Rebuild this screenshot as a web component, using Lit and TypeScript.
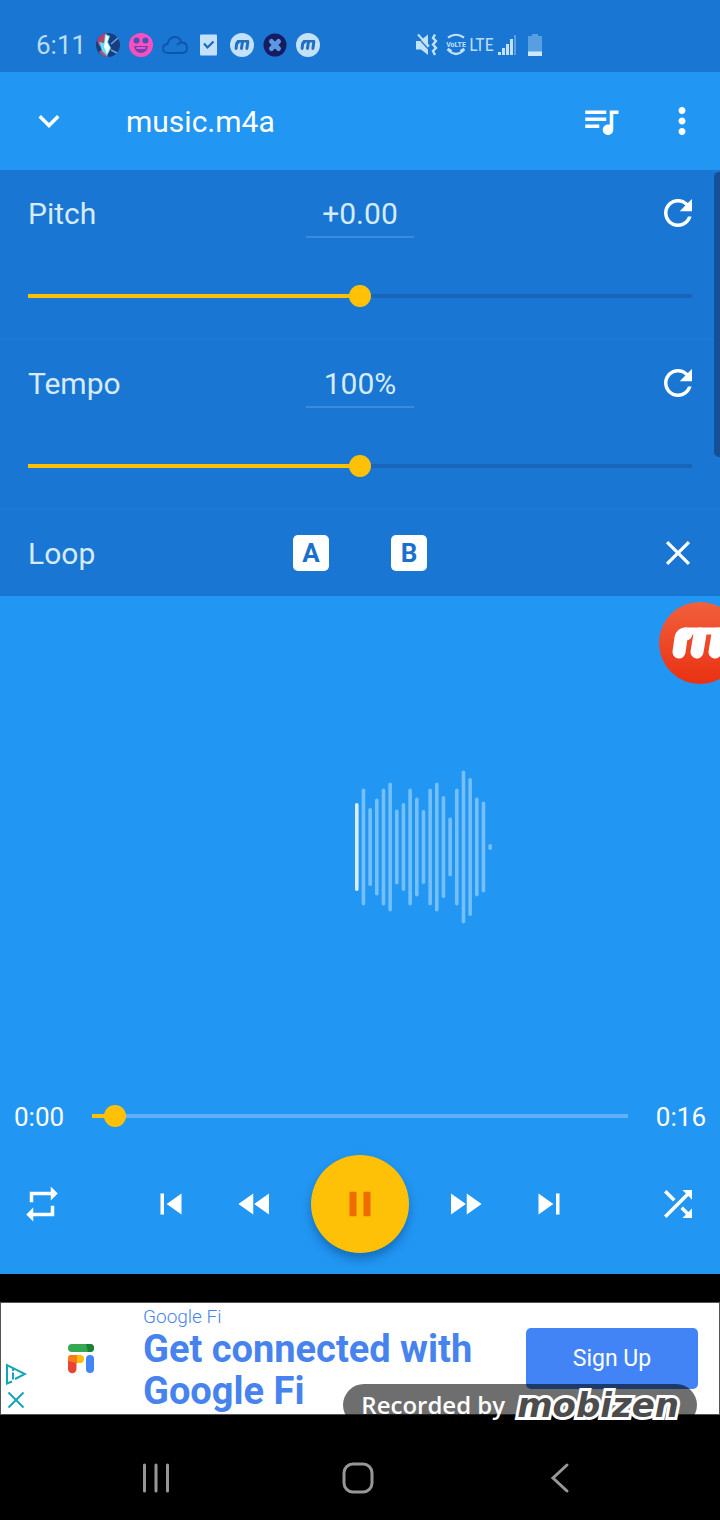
import { LitElement, html, svg, css } from "lit";
import { customElement, property, state } from "lit/decorators.js";

const ICONS: Record<string, string> = {
  expand: "M16.59 8.59L12 13.17 7.41 8.59 6 10l6 6 6-6z",
  queue:
    "M15 6H3v2h12V6zm0 4H3v2h12v-2zM3 16h8v-2H3v2zM17 6v8.18c-.31-.11-.65-.18-1-.18-1.66 0-3 1.34-3 3s1.34 3 3 3 3-1.34 3-3V8h3V6h-5z",
  more: "M12 8c1.1 0 2-.9 2-2s-.9-2-2-2-2 .9-2 2 .9 2 2 2zm0 2c-1.1 0-2 .9-2 2s.9 2 2 2 2-.9 2-2-.9-2-2-2zm0 6c-1.1 0-2 .9-2 2s.9 2 2 2 2-.9 2-2-.9-2-2-2z",
  refresh:
    "M17.65 6.35C16.2 4.9 14.21 4 12 4c-4.42 0-7.99 3.58-7.99 8s3.57 8 7.99 8c3.73 0 6.84-2.55 7.73-6h-2.08c-.82 2.33-3.04 4-5.65 4-3.31 0-6-2.69-6-6s2.69-6 6-6c1.66 0 3.14.69 4.22 1.78L13 11h7V4l-2.35 2.35z",
  close: "M6.4 5.100L5.100 6.400 10.700 12 5.100 17.600l1.300 1.300L12 13.300l5.600 5.600 1.300-1.300L13.300 12l5.600-5.600-1.300-1.300L12 10.700z",
  repeat: "M7 7h10v3l4-4-4-4v3H5v6h2V7zm10 10H7v-3l-4 4 4 4v-3h12v-6h-2v4z",
  previous: "M6 6h2v12H6zm3.500 6l8.500 6V6z",
  rewind: "M11 18V6l-8.500 6 8.500 6zm.5-6l8.500 6V6l-8.500 6z",
  pause: "M6 19h4V5H6v14zm8-14v14h4V5h-4z",
  forward: "M4 18l8.500-6L4 6v12zm9-12v12l8.500-6L13 6z",
  next: "M6 18l8.500-6L6 6v12zM16 6v12h2V6h-2z",
  shuffle:
    "M10.59 9.17L5.41 4 4 5.41l5.170 5.170 1.420-1.410zM14.500 4l2.040 2.040L4 18.590 5.410 20 17.960 7.460 20 9.500V4h-5.500zm.33 9.410l-1.410 1.410 3.130 3.130L14.500 20H20v-5.500l-2.040 2.040-3.130-3.130z",
};

const WAVE = [88, 117, 78, 97, 117, 129, 75, 88, 117, 99, 74, 117, 129, 102, 59, 117, 153, 138, 99, 91, 6];

const mLogo = (color: string, leg: number) => svg`
  <g fill="none" stroke=${color} stroke-linecap="round" stroke-linejoin="round">
    <path stroke-width=${leg} d="M7 26 L9 12 Q10 8 14 8 M25 26 L28 8 M43 26 L46 8"/>
    <path stroke-width="7" d="M13 5 H47"/>
  </g>`;

@customElement("md-icon")
export class MdIcon extends LitElement {
  @property() name = "";
  static styles = css`
    :host { display: block; width: 42px; height: 42px; }
    svg { display: block; width: 100%; height: 100%; fill: currentColor; }
  `;
  render() {
    return html`<svg viewBox="0 0 24 24" aria-hidden="true"><path d=${ICONS[this.name] ?? ""}></path></svg>`;
  }
}

@customElement("seek-slider")
export class SeekSlider extends LitElement {
  @property() label = "";
  @property({ type: Number }) value = 0;
  static styles = css`
    :host { display: block; --rail: #1866ba; }
    .range {
      appearance: none; -webkit-appearance: none; display: block;
      width: 100%; height: 22px; margin: 0; background: none; outline: none;
    }
    .range::-webkit-slider-runnable-track {
      height: 4px;
      background: linear-gradient(to right, #ffc107 var(--fill), var(--rail) var(--fill));
    }
    .range::-webkit-slider-thumb {
      -webkit-appearance: none; width: 22px; height: 22px; margin-top: -9px;
      border-radius: 50%; background: #ffc107;
    }
  `;
  private onInput(e: Event) {
    this.value = Number((e.target as HTMLInputElement).value);
  }
  render() {
    return html`<input class="range" type="range" min="0" max="1000" aria-label=${this.label}
      .value=${String(this.value)} style="--fill:${this.value / 10}%" @input=${this.onInput} />`;
  }
}

@customElement("status-bar")
export class StatusBar extends LitElement {
  static styles = css`
    :host {
      display: flex; align-items: center; box-sizing: border-box; height: 72px;
      padding: 18px 36px 0; background: #1976d2; color: #b9dcfa;
      font: 26px/30px Roboto, sans-serif;
    }
    .notices { display: flex; gap: 9px; margin-left: 10px; }
    .system { display: flex; align-items: center; gap: 8px; margin-left: 96px; }
    .network { display: flex; align-items: center; gap: 3px; }
    svg { display: block; height: 24px; }
    .lte { font: 18px/24px "Liberation Sans Narrow", "Roboto Condensed", Roboto, sans-serif; }
    .tiny { font: bold 7px Roboto, sans-serif; }
  `;
  private mobizen() {
    return html`<svg width="24" viewBox="0 0 24 24"><circle cx="12" cy="12" r="12" fill="#c3e1fb"/>
      <g transform="translate(4 6.500) scale(.3 .34)">${mLogo("#1f6fc2", 10)}</g></svg>`;
  }
  render() {
    return html`
      <span>6:11</span>
      <div class="notices">
        <svg width="24" viewBox="0 0 24 24">
          <circle cx="12" cy="12" r="12" fill="#173f80"/>
          <path d="M1 7 Q5 0 11 0 L10 10 L3 13Z" fill="#b0446e"/>
          <path d="M3 19 Q8 13 12 24 Q6 24 3 19Z" fill="#a3577f"/>
          <path d="M9 1 L14 3 L12 9 L15 15 L11 23 L6 18 L3 9 L8 10Z" fill="#63dcf2"/>
          <path d="M10 2 L13 4 L11 9 L14 15 L11 21 L8 14Z" fill="#f4feff"/>
          <path d="M15 11 L22 5 M15 17 L21 20" stroke="#69a7dc" stroke-width="1.500"/>
        </svg>
        <svg width="24" viewBox="0 0 24 24">
          <circle cx="12" cy="12" r="12" fill="#fb4fc0"/>
          <circle cx="7.500" cy="7.500" r="3" fill="#3f55b8"/><circle cx="16.500" cy="7.500" r="3" fill="#3f55b8"/>
          <path d="M5 13 H19 Q18 20 12 20 Q6 20 5 13Z" fill="#6a45b2"/>
          <path d="M7.500 14 H16.500 V16 H7.500Z" fill="#fb4fc0"/>
        </svg>
        <svg width="26" viewBox="0 0 26 24"><path d="M6 20 Q1 20 1 15.500 Q1 11.500 5.500 11 Q7 4 13 4 Q18 4 19.500 9.500 Q25 9.500 25 15 Q25 20 20 20Z M15 12 Q17 9.500 19.500 9.500" fill="none" stroke="#0f55ac" stroke-width="1.800"/></svg>
        <svg width="24" viewBox="0 0 24 24"><rect x="3" y="1.500" width="17" height="21" rx="1" fill="#c3e1fb"/>
          <path d="M7 10.500 L10.500 14.500 L16.500 8.500" fill="none" stroke="#1a69bd" stroke-width="2.200"/></svg>
        ${this.mobizen()}
        <svg width="24" viewBox="0 0 24 24"><circle cx="12" cy="12" r="11.500" fill="#161b62"/>
          <path d="M8.500 8.500 L15.500 15.500 M15.500 8.500 L8.500 15.500" stroke="#5a98e0" stroke-width="5" stroke-linecap="round"/>
          <path d="M12 5.500v2.500M12 16v2.500M5.500 12h2.500M16 12h2.500" stroke="#161b62" stroke-width="2"/></svg>
        ${this.mobizen()}
      </div>
      <div class="system">
        <svg width="22" viewBox="0 0 22 24">
          <path d="M0 8 H4 L12 1.500 V22 L5 16.500 H0Z" fill="#c3e1fb"/>
          <path d="M1 3.500 L14 18" stroke="#1976d2" stroke-width="1.200"/>
          <path d="M2 1.500 L13 13.500" stroke="#c3e1fb" stroke-width="2"/>
          <path d="M19 1.500 L17 5 L20 8 L17 11.500 L20 15 L17 18 L19 22" fill="none" stroke="#c3e1fb" stroke-width="2.400"/>
        </svg>
        <div class="network">
          <svg width="20" viewBox="1 0 20 24">
            <path d="M3 4.500 Q11 -1 19 4.500 M4 18 Q11 24 18 18" fill="none" stroke="#c3e1fb" stroke-width="2.200"/>
            <path d="M2.500 16 L6.500 18.500 M19.500 16 L15.500 18.500" stroke="#c3e1fb" stroke-width="3"/>
            <text class="tiny" x="11" y="13.500" text-anchor="middle" fill="#c3e1fb">VoLTE</text>
          </svg>
          <span class="lte">LTE</span>
          <svg width="22" viewBox="0 0 22 24">
            <g fill="#c3e1fb"><rect x="1" y="19" width="3" height="3"/><rect x="5" y="15" width="3" height="7"/>
            <rect x="9" y="11" width="3" height="11"/><rect x="13" y="6" width="3" height="16"/></g>
            <rect x="17" y="2" width="2" height="20" fill="#5b9fe0"/>
          </svg>
        </div>
        <svg width="16" viewBox="0 0 16 24"><path d="M5 1h6v2h4v20H1V3h4z" fill="#589fe2"/><rect x="1" y="18.500" width="14" height="4.500" fill="#cfe7fc"/></svg>
      </div>`;
  }
}

@customElement("adjust-row")
export class AdjustRow extends LitElement {
  @property() label = "";
  @property() value = "";
  static styles = css`
    :host { display: block; box-sizing: border-box; height: 170px; border-bottom: 2px solid #1c79d6; }
    .head { display: grid; grid-template-columns: 1fr auto 1fr; align-items: center; height: 86px; }
    .label { padding: 2px 0 0 28px; }
    .value {
      box-sizing: border-box; width: 108px; height: 50px; margin: 0; padding: 2px 0 0;
      border: 0; border-bottom: 2px solid #3c8bdf; border-radius: 0; outline: none;
      background: none; color: inherit; font: inherit; text-align: center;
    }
    .reset {
      justify-self: end; display: flex; align-items: center; justify-content: center;
      width: 84px; height: 84px; padding: 0; border: 0; background: none; color: #fff;
    }
    .slide { padding: 29px 28px; }
  `;
  render() {
    return html`
      <div class="head">
        <label class="label" for="value">${this.label}</label>
        <input class="value" id="value" type="text" .value=${this.value} />
        <button class="reset" aria-label="Reset ${this.label}"><md-icon name="refresh"></md-icon></button>
      </div>
      <div class="slide"><seek-slider label=${this.label} .value=${500}></seek-slider></div>`;
  }
}

@customElement("ad-banner")
export class AdBanner extends LitElement {
  static styles = css`
    :host { display: block; position: relative; padding: 28px 0 21px; background: #000; }
    .ad {
      display: flex; align-items: center; box-sizing: border-box; min-height: 113px;
      border: 1px solid #555; background: #fff; color: #4683ee; font-family: Roboto, sans-serif;
    }
    .marks { display: flex; flex-direction: column; align-self: flex-end; gap: 4px; width: 28px; padding: 0 0 3px 4px; box-sizing: border-box; }
    .mark { display: block; padding: 0; border: 0; background: none; height: 22px; }
    .mark svg, .logo { display: block; }
    .logo { margin: 0 48px 0 38px; }
    .copy { flex: 1; text-decoration: none; color: inherit; align-self: flex-start; padding-top: 2px; }
    .brand, .headline { display: block; width: fit-content; }
    .brand { font-size: 19px; line-height: 23px; font-weight: 300; }
    .headline { font-size: 38px; line-height: 42px; font-weight: 700; }
    .cta {
      width: 172px; height: 61px; margin-right: 21px; border: 0; border-radius: 5px;
      background: #4284f5; color: #fff; font: 23px/30px Roboto, sans-serif;
    }
    .recorded {
      position: absolute; top: 110px; right: 23px; display: flex; align-items: center;
      justify-content: flex-end; gap: 12px; box-sizing: border-box; width: 354px; height: 42px;
      padding-right: 18px; border-radius: 21px; background: rgba(0, 0, 0, 0.57); color: #fff;
      font: 600 24px/42px "Open Sans", sans-serif; pointer-events: none; white-space: nowrap;
    }
    .mobizen {
      font: italic 700 34px/42px "DejaVu Sans", sans-serif; color: #4c4c4c;
      -webkit-text-stroke: 6px #fff; paint-order: stroke fill;
    }
  `;
  render() {
    return html`
      <section class="ad" aria-label="Advertisement">
        <div class="marks">
          <button class="mark" aria-label="Ad choices">
            <svg width="22" height="22" viewBox="0 0 22 22" fill="none" stroke="#12a5b8" stroke-width="2">
              <path d="M7 18.500 L2 20.500 V2 L20 11 L10 16"/><path d="M8 9.500v7M8 6v2"/></svg>
          </button>
          <button class="mark" aria-label="Close ad">
            <svg width="22" height="22" viewBox="0 0 22 22" stroke="#12a5b8" stroke-width="2"><path d="M3.500 3.500 L18.500 18.500 M18.500 3.500 L3.500 18.500"/></svg>
          </button>
        </div>
        <svg class="logo" width="28" height="30" viewBox="0 0 28 30">
          <rect x="1" y="0" width="26" height="8" rx="4" fill="#34a853"/>
          <path d="M19 0h4a4 4 0 0 1 0 8h-2z" fill="#188038"/>
          <path d="M5 11 h8 a4 4 0 0 1 0 8 h-4 L1 15 a4 4 0 0 1 4-4z" fill="#fbbc04"/>
          <path d="M9.500 11 V25 a4 4 0 0 1-8.500 0 V15 a4 4 0 0 1 4-4z" fill="#ea4335"/>
          <path d="M1 17 V15 a4 4 0 0 1 4-4 h4.500 v8z" fill="#fa7b17"/>
          <rect x="19" y="11" width="8" height="18" rx="4" fill="#4285f4"/>
        </svg>
        <a class="copy" href="#">
          <span class="brand">Google Fi</span>
          <span class="headline">Get connected with</span>
          <span class="headline">Google Fi</span>
        </a>
        <button class="cta">Sign Up</button>
      </section>
      <div class="recorded"><span>Recorded by</span><span class="mobizen">mobizen</span></div>`;
  }
}

@customElement("app-root")
export class AppRoot extends LitElement {
  @state() private playing = true;
  static styles = css`
    :host {
      display: flex; flex-direction: column; min-height: 100vh; overflow: hidden;
      background: #2196f3; color: #fff; font: 30px/36px Roboto, sans-serif;
    }
    .icon {
      display: flex; align-items: center; justify-content: center; flex: none;
      width: 84px; height: 84px; padding: 0; border: 0; background: none; color: #fff;
    }
    .bar { display: flex; align-items: center; height: 98px; padding-left: 7px; }
    .title { flex: 1; margin: 0 0 0 35px; padding-top: 2px; font: inherit; }
    .menu { width: 77px; }
    .panel { position: relative; background: #1976d2; color: #d6ebfd; }
    .scroll {
      position: absolute; top: 2px; right: 0; width: 6px; height: 285px;
      border-radius: 5px 0 0 5px; background: #174f97;
    }
    .loop { display: grid; grid-template-columns: 1fr auto 1fr; align-items: center; height: 86px; }
    .label { padding: 2px 0 0 28px; }
    .points { display: flex; gap: 62px; }
    .point {
      width: 36px; height: 36px; padding: 0; border: 0; border-radius: 5px; background: #fff;
      color: #1a70cb; font: 700 26px/36px Roboto, sans-serif;
    }
    .clear { justify-self: end; }
    .stage { position: relative; flex: 1; display: flex; align-items: center; padding-top: 10px; }
    .wave { display: block; margin-left: calc(50% - 6px); }
    .bubble {
      position: absolute; top: 6px; right: -21px; width: 82px; height: 82px; padding: 0 0 0 13px;
      display: flex; align-items: center;
      border: 0; border-radius: 50%; background: linear-gradient(#f2603c, #e93113);
    }
    .bubble svg { display: block; flex: none; }
    .seek { display: flex; align-items: center; gap: 28px; height: 56px; padding: 0 14px; }
    .time { padding-top: 2px; font-size: 26px; }
    .track { flex: 1; --rail: #63b1f5; }
    .controls { display: flex; align-items: center; justify-content: space-between; padding: 11px 0 21px; }
    .transport { display: flex; align-items: center; }
    .play {
      display: flex; align-items: center; justify-content: center; width: 98px; height: 98px;
      margin: 0 14px; padding: 0; border: 0; border-radius: 50%; background: #ffc107; color: #ee6c02;
      box-shadow: 0 6px 10px rgba(0, 40, 90, 0.35);
    }
    .nav { display: grid; grid-template-columns: 1fr 1fr 1fr; justify-items: center; padding: 0 59px 0 55px; background: #000; }
    .nav svg { fill: none; stroke: #979797; stroke-width: 3; stroke-linecap: round; }
  `;
  private btn(name: string, label: string, cls = "") {
    return html`<button class="icon ${cls}" aria-label=${label}><md-icon name=${name}></md-icon></button>`;
  }
  render() {
    return html`
      <status-bar></status-bar>
      <header class="bar">
        ${this.btn("expand", "Collapse")}
        <h1 class="title">music.m4a</h1>
        ${this.btn("queue", "Queue")} ${this.btn("more", "More options", "menu")}
      </header>
      <section class="panel">
        <adjust-row label="Pitch" value="+0.00"></adjust-row>
        <adjust-row label="Tempo" value="100%"></adjust-row>
        <div class="loop">
          <span class="label">Loop</span>
          <div class="points"><button class="point">A</button><button class="point">B</button></div>
          ${this.btn("close", "Clear loop", "clear")}
        </div>
        <div class="scroll"></div>
      </section>
      <main class="stage">
        <svg class="wave" width="144" height="154" viewBox="0 0 144 154" aria-hidden="true">
          ${WAVE.map((h, i) => svg`<rect x=${1 + (i * 20) / 3} y=${77 - h / 2} width="3.600" height=${h} rx="1.800"
            fill=${i === 0 ? "#d9eefe" : "#76c0fa"}></rect>`)}
        </svg>
        <button class="bubble" aria-label="Mobizen recorder">
          <svg width="56" height="34" viewBox="0 0 56 34">${mLogo("#fff", 13)}</svg>
        </button>
      </main>
      <div class="seek">
        <span class="time">0:00</span>
        <seek-slider class="track" label="Position" .value=${24}></seek-slider>
        <span class="time">0:16</span>
      </div>
      <div class="controls">
        ${this.btn("repeat", "Repeat")}
        <div class="transport">
          ${this.btn("previous", "Previous")}${this.btn("rewind", "Rewind")}
          <button class="play" aria-label="Pause" aria-pressed=${this.playing}><md-icon name="pause"></md-icon></button>
          ${this.btn("forward", "Fast forward")}${this.btn("next", "Next")}
        </div>
        ${this.btn("shuffle", "Shuffle")}
      </div>
      <ad-banner></ad-banner>
      <nav class="nav">
        <button class="icon" aria-label="Recents"><svg width="32" height="32" viewBox="0 0 32 32"><path d="M4.500 3v26M16 3v26M27.500 3v26"/></svg></button>
        <button class="icon" aria-label="Home"><svg width="32" height="32" viewBox="0 0 32 32"><rect x="2" y="2" width="28" height="28" rx="9"/></svg></button>
        <button class="icon" aria-label="Back"><svg width="32" height="32" viewBox="0 0 32 32"><path d="M23 3 L9 16 L23 29"/></svg></button>
      </nav>`;
  }
}
